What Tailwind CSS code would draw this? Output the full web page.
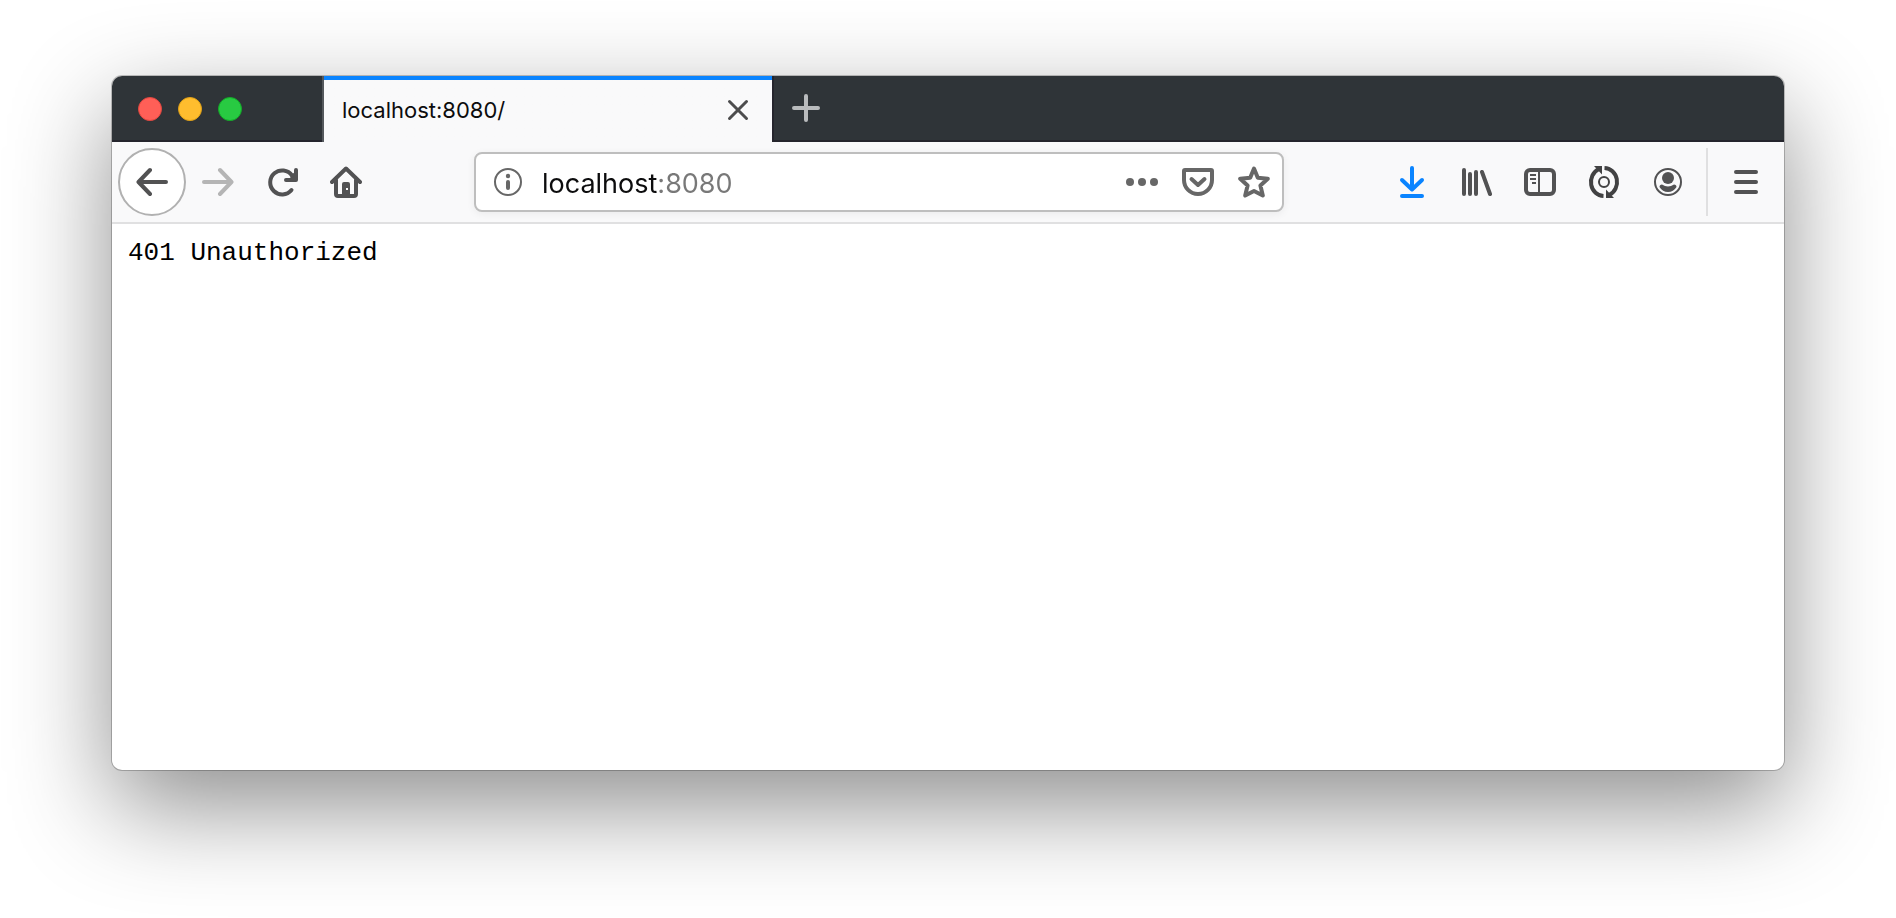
<!DOCTYPE html>
<html lang="en">
<head>
<meta charset="utf-8">
<title>localhost:8080/</title>
<script src="https://cdn.jsdelivr.net/npm/@tailwindcss/browser@4"></script>
</head>
<body class="flex min-h-screen flex-col bg-white px-28 pt-19 pb-37 font-['Inter','Liberation_Sans',sans-serif]">
<div class="flex flex-1 flex-col overflow-hidden rounded-[10px] bg-white shadow-[0_0_0_1px_rgba(0,0,0,0.22),0_36px_100px_rgba(0,0,0,0.45)]">

  <!-- Tab strip -->
  <header class="flex h-[66px] bg-[#2f3438]">
    <div class="flex w-[210px] items-center gap-4 border-b-2 border-[#25252d] pt-0.5 pl-[26px]">
      <button aria-label="Close window" class="size-6 rounded-full border border-[#e2463f] bg-[#ff5f57]"></button>
      <button aria-label="Minimize window" class="size-6 rounded-full border border-[#e1a116] bg-[#ffbd2e]"></button>
      <button aria-label="Zoom window" class="size-6 rounded-full border border-[#12ac28] bg-[#28ca42]"></button>
    </div>
    <div class="flex w-[450px] items-center justify-between border-l-2 border-[#54585c] bg-[#f9f9fa] bg-linear-to-b from-[#0a84ff] from-[4px] to-[#f9f9fa] to-[4px] pl-[18px] pr-[18px]">
      <a href="#page" class="pt-0.5 text-[22px] leading-7 text-[#0c0c0d]">localhost:8080/</a>
      <button aria-label="Close tab" class="text-[#4c4c4d]">
        <svg class="size-8" viewBox="0 0 32 32" fill="none" stroke="currentColor" stroke-width="3" stroke-linecap="round"><path d="M7.500 8.500l17 17M24.500 8.500l-17 17"/></svg>
      </button>
    </div>
    <div class="flex flex-1 items-center border-b-2 border-l-2 border-[#25252d] pl-4">
      <button aria-label="New tab" class="text-[#b9bbbd]">
        <svg class="size-8" viewBox="0 0 32 32" fill="none" stroke="currentColor" stroke-width="4" stroke-linecap="round"><path d="M16 4v24M4 16h24"/></svg>
      </button>
    </div>
  </header>

  <!-- Navigation toolbar -->
  <nav class="flex h-[82px] items-center border-b-2 border-[#e0e0e1] bg-[#f9f9fa] px-[6px] text-[#525253]">
    <button aria-label="Back" class="flex size-[68px] items-center justify-center rounded-full border-2 border-[#b1b1b1] bg-white">
      <svg class="size-8" viewBox="0 0 32 32" fill="none" stroke="currentColor" stroke-width="4" stroke-linecap="round" stroke-linejoin="round"><path d="M30 16H3M14 4 2.500 16 14 28"/></svg>
    </button>
    <button aria-label="Forward" disabled class="flex h-16 w-16 items-center justify-center text-[#b5b5b5]">
      <svg class="size-8" viewBox="0 0 32 32" fill="none" stroke="currentColor" stroke-width="4" stroke-linecap="round" stroke-linejoin="round"><path d="M2 16h27M18 4l11.500 12L18 28"/></svg>
    </button>
    <button aria-label="Reload" class="flex h-16 w-16 items-center justify-center">
      <svg class="size-8" viewBox="0 0 32 32" fill="none" stroke="currentColor" stroke-width="4" stroke-linecap="round" stroke-linejoin="round"><path d="M25.500 24A12 12 0 1 1 26 9.500"/><path d="M30 4v10H20"/><path d="M25 9l4-3v7h-5z" fill="currentColor" stroke="none"/></svg>
    </button>
    <button aria-label="Home" class="flex h-16 w-16 items-center justify-center">
      <svg class="size-8" viewBox="0 0 32 32" fill="none" stroke="currentColor" stroke-width="4" stroke-linecap="round" stroke-linejoin="round"><path d="M2 16 16 2.500 30 16"/><path d="M6 14v14q0 2 2 2h16q2 0 2-2V14"/><path d="M12 30V18q0-2 2-2h4q2 0 2 2v12zM16 22v2h2v-2z" fill="currentColor" fill-rule="evenodd" stroke="none"/></svg>
    </button>

    <div class="mx-24 flex h-15 min-w-0 flex-1 items-center rounded-lg border-2 border-[#bebebe] bg-white text-[#676767] shadow-[0_2px_8px_rgba(0,0,0,0.06)]">
      <button aria-label="Site information" class="ml-3 flex h-14 w-10 shrink-0 items-center justify-center">
        <svg class="size-8" viewBox="0 0 32 32" fill="none" stroke="currentColor"><circle cx="16" cy="16" r="13" stroke-width="2"/><circle cx="16" cy="10" r="2.200" fill="currentColor" stroke="none"/><path d="M16 16v6" stroke-width="4" stroke-linecap="round"/></svg>
      </button>
      <input aria-label="Address" type="text" value="localhost:8080" class="ml-[14px] h-14 min-w-0 flex-1 bg-linear-to-r from-[#0c0c0d] from-[117px] to-[#787878] to-[117px] bg-clip-text pt-0.5 text-[27px] text-transparent outline-none">
      <button aria-label="Page actions" class="flex h-14 w-14 shrink-0 items-center justify-center">
        <svg class="size-8" viewBox="0 0 32 32" fill="currentColor"><circle cx="4" cy="16" r="4"/><circle cx="16" cy="16" r="4"/><circle cx="28" cy="16" r="4"/></svg>
      </button>
      <button aria-label="Save to Pocket" class="flex h-14 w-14 shrink-0 items-center justify-center">
        <svg class="size-8" viewBox="0 0 32 32" fill="none" stroke="currentColor" stroke-width="4" stroke-linecap="round" stroke-linejoin="round"><path d="M3 4h26q1 0 1 1v9a14 14 0 0 1-28 0V5q0-1 1-1z"/><path d="M9.500 13l6.500 6 6.500-6"/></svg>
      </button>
      <button aria-label="Bookmark this page" class="flex h-14 w-14 shrink-0 items-center justify-center">
        <svg class="size-8" viewBox="0 0 32 32" fill="none" stroke="currentColor" stroke-width="4" stroke-linecap="round" stroke-linejoin="round"><path d="M16 2.500l3.800 9.300 10 .900-7.400 6.800 2.400 10L16 25l-8.800 4.500 2.400-10-7.400-6.800 10-.900z"/></svg>
      </button>
    </div>

    <button aria-label="Downloads" class="flex h-16 w-16 items-center justify-center text-[#0a84ff]">
      <svg class="size-8" viewBox="0 0 32 32" fill="none" stroke="currentColor" stroke-width="4" stroke-linecap="round" stroke-linejoin="round"><path d="M16 2v21M6 14l10 9.500L26 14M6 30h20"/></svg>
    </button>
    <button aria-label="Library" class="flex h-16 w-16 items-center justify-center">
      <svg class="size-8" viewBox="0 0 32 32" fill="none" stroke="currentColor" stroke-width="4" stroke-linecap="round"><path d="M4 4v24M10 8v20M16 6v22M22 6l8 22"/></svg>
    </button>
    <button aria-label="Sidebars" class="flex h-16 w-16 items-center justify-center">
      <svg class="size-8" viewBox="0 0 32 32" fill="none" stroke="currentColor"><rect x="2" y="4" width="28" height="24" rx="4" stroke-width="4"/><path d="M15 4v24M6 9h6M6 13h6M8 17h4" stroke-width="2"/></svg>
    </button>
    <button aria-label="Sync extension" class="flex h-16 w-16 items-center justify-center text-[#424243]">
      <svg class="size-8" viewBox="0 0 32 32" fill="none" stroke="currentColor" stroke-width="4"><circle cx="16" cy="16" r="5" stroke-width="2"/><path d="M15.500 30A13 14 0 0 1 10.500 3.300M16.500 2a13 14 0 0 1 5 26.700"/><path d="M6 0h8v8.500zM26 32h-8v-8.500z" fill="currentColor" stroke="none"/></svg>
    </button>
    <button aria-label="Account" class="flex h-16 w-16 items-center justify-center">
      <svg class="size-8" viewBox="0 0 32 32" fill="none" stroke="currentColor"><circle cx="16" cy="16" r="13" stroke-width="2"/><circle cx="16" cy="12" r="6" fill="currentColor" stroke="none"/><path d="M10 18.500q6 4 12 0 2.500 0 2.500 2.500-3 5-8.500 5t-8.500-5q0-2.500 2.500-2.500z" fill="currentColor" stroke="none"/></svg>
    </button>
    <div class="mx-[6px] h-[68px] w-0.5 bg-[#e0e0e1]"></div>
    <button aria-label="Open menu" class="flex h-16 w-16 items-center justify-center">
      <svg class="size-8" viewBox="0 0 32 32" fill="none" stroke="currentColor" stroke-width="4" stroke-linecap="round"><path d="M6 6h20M6 16h20M6 26h20"/></svg>
    </button>
  </nav>

  <main id="page" class="flex-1 p-4">
    <pre class="font-['Liberation_Mono',monospace] text-[26px] leading-[26px] text-black">401 Unauthorized</pre>
  </main>
</div>
</body>
</html>
